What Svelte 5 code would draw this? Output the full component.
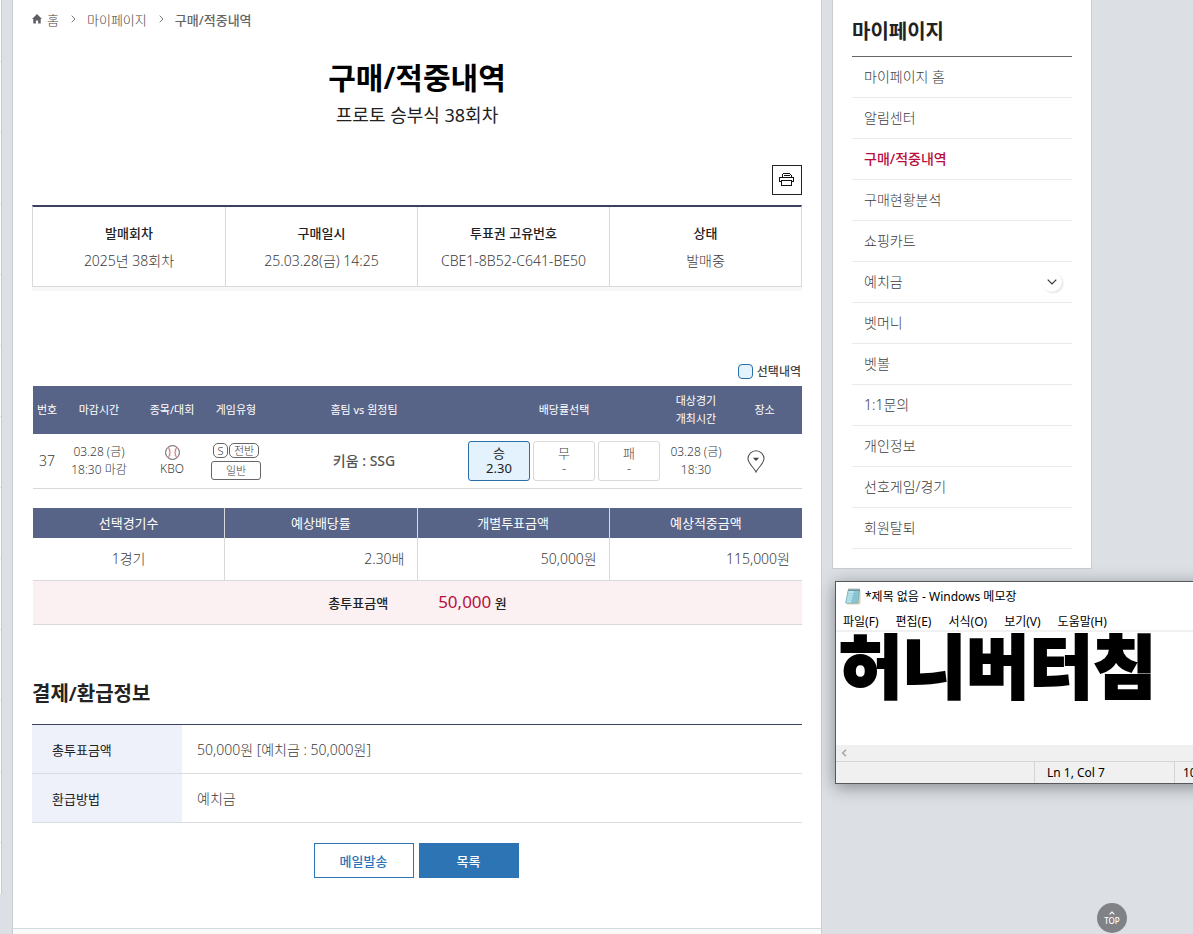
<script>
  const crumbs = ['홈', '마이페이지'];
  const summary = [
    { label: '발매회차', value: '2025년 38회차' },
    { label: '구매일시', value: '25.03.28(금) 14:25' },
    { label: '투표권 고유번호', value: 'CBE1-8B52-C641-BE50' },
    { label: '상태', value: '발매중' }
  ];
  const odds = [
    { name: '승', rate: '2.30', picked: true },
    { name: '무', rate: '-', picked: false },
    { name: '패', rate: '-', picked: false }
  ];
  const menu = [
    '마이페이지 홈', '알림센터', '구매/적중내역', '구매현황분석', '쇼핑카트', '예치금',
    '벳머니', '벳볼', '1:1문의', '개인정보', '선호게임/경기', '회원탈퇴'
  ];
  const padMenu = ['파일(F)', '편집(E)', '서식(O)', '보기(V)', '도움말(H)'];
</script>

<div class="page">
  <div class="edge"></div>

  <main>
    <nav class="crumbs">
      <svg width="10" height="10" viewBox="0 0 10 10"><path d="M5 0 10 5H8.7V9.5H6.1V6.5H3.9V9.5H1.3V5H0Z" fill="#5e5e64" /></svg>
      {#each crumbs as crumb}
        <a href="#top">{crumb}</a>
        <svg class="sep" width="5" height="8" viewBox="0 0 5 8"><path d="M.7.7 4 4 .7 7.3" fill="none" stroke="#777" /></svg>
      {/each}
      <strong>구매/적중내역</strong>
    </nav>

    <header>
      <h1>구매/적중내역</h1>
      <p>프로토 승부식 38회차</p>
    </header>

    <div class="tools">
      <button class="print" aria-label="인쇄">
        <svg width="16" height="14" viewBox="0 0 16 14" fill="none" stroke="#111" shape-rendering="crispEdges">
          <path d="M3.5 4.5V1.5L4.5 .5H10.5L12.5 2.5V4.5M5 2.5H11M2.5 8.5H.5V4.5H14.5V8.5H12.5M2.5 7.5H12.5V12.5H2.5Z" />
        </svg>
      </button>
    </div>

    <dl class="summary">
      {#each summary as item}
        <div><dt>{item.label}</dt><dd>{item.value}</dd></div>
      {/each}
    </dl>

    <div class="legend"><i></i>선택내역</div>

    <div class="tables">
      <table class="games">
        <colgroup>
          <col class="c-no" /><col class="c-close" /><col class="c-event" /><col class="c-type" />
          <col /><col class="c-odds" /><col class="c-time" /><col class="c-place" />
        </colgroup>
        <thead>
          <tr>
            <th>번호</th><th>마감시간</th><th>종목/대회</th><th>게임유형</th><th>홈팀 vs 원정팀</th>
            <th>배당률선택</th><th>대상경기<br />개최시간</th><th>장소</th>
          </tr>
        </thead>
        <tbody>
          <tr>
            <td class="no">37</td>
            <td>03.28 (금)<br />18:30 마감</td>
            <td>
              <span class="event">
                <svg width="15" height="15" viewBox="0 0 15 15" fill="none">
                  <circle cx="7.5" cy="7.5" r="6.9" stroke="#555" />
                  <path d="M3.6 2.2Q6.6 7.5 3.6 12.8M11.4 2.2Q8.4 7.5 11.4 12.8" stroke="#c9646e" />
                  <path d="M3.4 5H6.2M3.6 7.5H6.4M3.4 10H6.2M8.8 5H11.6M8.6 7.5H11.4M8.8 10H11.6" stroke="#e2a9ad" stroke-width=".7" />
                </svg>
                KBO
              </span>
            </td>
            <td>
              <span class="badges"><b class="pill">S</b><b class="pill wide">전반</b><b class="kind">일반</b></span>
            </td>
            <td class="teams">키움 : SSG</td>
            <td>
              <div class="odds">
                {#each odds as odd}
                  <button class:picked={odd.picked}><span>{odd.name}</span><span>{odd.rate}</span></button>
                {/each}
              </div>
            </td>
            <td>03.28 (금)<br />18:30</td>
            <td class="place">
              <svg width="18" height="23" viewBox="0 0 18 23">
                <path d="M9 22C7 17.5 1 13.5 1 8.8A8 8 0 0 1 17 8.8C17 13.5 11 17.5 9 22Z" fill="none" stroke="#555" stroke-width="1.1" />
                <path d="M5.8 7.7H12.2L9 11Z" fill="#444" />
              </svg>
            </td>
          </tr>
        </tbody>
      </table>

      <table class="totals">
        <thead>
          <tr><th>선택경기수</th><th>예상배당률</th><th>개별투표금액</th><th>예상적중금액</th></tr>
        </thead>
        <tbody>
          <tr><td class="count">1경기</td><td>2.30배</td><td>50,000원</td><td>115,000원</td></tr>
          <tr class="sum">
            <td colspan="4">
              <div><span>총투표금액</span><span><em>50,000</em> 원</span></div>
            </td>
          </tr>
        </tbody>
      </table>
    </div>

    <h2 class="section">결제/환급정보</h2>
    <table class="payment">
      <tbody>
        <tr><th>총투표금액</th><td>50,000원 [예치금 : 50,000원]</td></tr>
        <tr><th>환급방법</th><td>예치금</td></tr>
      </tbody>
    </table>

    <div class="actions">
      <button>메일발송</button>
      <button class="primary">목록</button>
    </div>
    <div class="foot"></div>
  </main>

  <aside>
    <h2>마이페이지</h2>
    <ul>
      {#each menu as item}
        <li>
          <a href="#top" class:current={item === '구매/적중내역'}>{item}</a>
          {#if item === '예치금'}
            <button class="more" aria-label="펼치기">
              <svg width="10" height="6" viewBox="0 0 10 6"><path d="M.7.7 5 5 9.3.7" fill="none" stroke="#333" stroke-width="1.2" /></svg>
            </button>
          {/if}
        </li>
      {/each}
    </ul>
  </aside>

  <section class="notepad">
    <div class="caption">
      <svg width="16" height="17" viewBox="0 0 16 17">
        <path d="M4 2.5H15.5V15.5L14 16.5H2Z" fill="#d8d2b4" />
        <path d="M3.2 2H14.5L12.8 15H.6Z" fill="#8cc9d9" stroke="#5c98ab" stroke-width=".6" />
        <path d="M3.6 3H9L6 14.4H1.4Z" fill="#c2e7ef" />
        <path d="M3 5.5H13M2.7 7.7H12.7M2.4 9.9H12.4M2 12.1H12" stroke="#70b2c5" stroke-width=".5" />
        <path d="M4 .5V3M6 .5V3M8 .5V3M10 .5V3M12 .5V3M14 .5V3" stroke="#4d5a60" stroke-width=".8" />
      </svg>
      *제목 없음 - Windows 메모장
    </div>
    <div class="padmenu">{#each padMenu as item}<span>{item}</span>{/each}</div>
    <div class="note">허니버터침</div>
    <div class="scroll">
      <svg width="6" height="8" viewBox="0 0 6 8"><path d="M5 .8 1.6 4 5 7.2" fill="none" stroke="#aaa" stroke-width="1.6" /></svg>
    </div>
    <div class="status"><span class="blank"></span><span class="pos">Ln 1, Col 7</span><span class="zoom">100%</span></div>
  </section>

  <a class="top" href="#top">
    <svg width="6" height="4" viewBox="0 0 6 4"><path d="M.6 3.4 3 1 5.4 3.4" fill="none" stroke="#fff" stroke-width="1.2" /></svg>
    TOP
  </a>
</div>

<style>
  :global(body) {
    background: #dce0e5;
  }
  .page {
    position: relative;
    display: flex;
    align-items: flex-start;
    gap: 10px;
    min-height: 100vh;
    box-sizing: border-box;
    padding-right: 101px;
    overflow: hidden;
    font-family: 'Noto Sans', 'Noto Sans CJK KR', sans-serif;
    font-size: 13px;
    font-weight: 300;
    color: #3c3c3c;
  }
  h1,
  h2,
  p,
  dl,
  dd,
  ul {
    margin: 0;
    padding: 0;
  }
  button {
    font: inherit;
    padding: 0;
    border-radius: 0;
    cursor: pointer;
  }
  a {
    color: inherit;
    text-decoration: none;
  }
  .edge {
    flex: none;
    width: 1px;
    height: 894px;
    border-right: 1px solid #c9cdd0;
    background: repeating-linear-gradient(#fff 0 61px, #e2e4e6 61px 62px, #fff 62px 71px);
  }
  main {
    flex: 1;
    min-width: 0;
    min-height: 100vh;
    box-sizing: border-box;
    padding: 0 19px;
    background: #fff;
    border: solid #c9cdd0;
    border-width: 0 1px;
  }
  .crumbs {
    display: flex;
    align-items: center;
    height: 38px;
    color: #444;
  }
  .crumbs a {
    margin-left: 5px;
  }
  .crumbs .sep {
    margin: 0 6px 0 12px;
  }
  .crumbs strong {
    margin-left: 5px;
    font-weight: 500;
    color: #666;
  }
  header {
    padding-top: 20px;
    text-align: center;
  }
  h1 {
    font-size: 30px;
    line-height: 40px;
    font-weight: 600;
    color: #000;
  }
  header p {
    font-size: 18px;
    line-height: 34px;
    font-weight: 400;
    color: #222;
  }
  .tools {
    display: flex;
    justify-content: flex-end;
    padding: 33px 0 10px;
  }
  .print {
    display: flex;
    align-items: center;
    justify-content: center;
    width: 30px;
    height: 30px;
    background: #fff;
    border: 1px solid #222;
  }
  .summary {
    display: grid;
    grid-template-columns: repeat(4, 1fr);
    text-align: center;
    border: 1px solid #d9d9d9;
    border-top: 2px solid #3b4260;
    box-shadow: 0 4px 0 #f7f7f7;
  }
  .summary div {
    padding: 13px 0 12px;
  }
  .summary div + div {
    border-left: 1px solid #d9d9d9;
  }
  dt {
    font-weight: 500;
    line-height: 27px;
    color: #222;
  }
  dd {
    font-size: 14px;
    line-height: 27px;
  }
  .legend {
    display: flex;
    align-items: center;
    justify-content: flex-end;
    gap: 4px;
    padding: 70px 1px 0 0;
    font-size: 12px;
    line-height: 29px;
    font-weight: 500;
    color: #444;
  }
  .legend i {
    width: 13px;
    height: 13px;
    border: 1px solid #2c6ea8;
    border-radius: 4px;
    background: #e3f2fc;
  }
  table {
    width: 100%;
    border-collapse: separate;
    border-spacing: 0;
    table-layout: fixed;
  }
  th,
  td {
    padding: 0;
  }
  .tables {
    padding-left: 1px;
  }
  .tables th {
    background: #586487;
    color: #fff;
    font-weight: 400;
  }
  .games {
    font-size: 12px;
    line-height: 18px;
    text-align: center;
  }
  .c-no {
    width: 28px;
  }
  .c-close {
    width: 76px;
  }
  .c-event {
    width: 70px;
  }
  .c-type {
    width: 58px;
  }
  .c-odds {
    width: 202px;
  }
  .c-time {
    width: 62px;
  }
  .c-place {
    width: 75px;
  }
  .games th {
    height: 48px;
    font-size: 11px;
    white-space: nowrap;
  }
  .games td {
    height: 54px;
    border-bottom: 1px solid #d9d9d9;
  }
  .games .no {
    font-size: 14px;
  }
  .games .teams {
    font-size: 14px;
    font-weight: 500;
    color: #555;
  }
  .event {
    display: flex;
    flex-direction: column;
    align-items: center;
    line-height: 18px;
  }
  .badges {
    display: flex;
    flex-wrap: wrap;
    justify-content: center;
    gap: 3px 1px;
  }
  .badges b {
    box-sizing: border-box;
    font-size: 11px;
    font-weight: 300;
    border: 1px solid #666;
  }
  .pill {
    width: 15px;
    line-height: 13px;
    border-radius: 5px;
  }
  .badges .wide {
    width: 30px;
  }
  .kind {
    width: 50px;
    line-height: 17px;
    border-radius: 3px;
  }
  .odds {
    display: flex;
    justify-content: center;
    gap: 3px;
  }
  .odds button {
    display: flex;
    flex-direction: column;
    align-items: center;
    justify-content: center;
    box-sizing: border-box;
    width: 62px;
    height: 40px;
    font-size: 13px;
    line-height: 15px;
    color: #444;
    background: #fff;
    border: 1px solid #d9d9d9;
    border-radius: 3px;
  }
  .odds .picked {
    color: #222;
    font-weight: 400;
    background: #e3f2fc;
    border-color: #2c6ea8;
  }
  .games .place {
    padding-right: 17px;
  }
  .place svg {
    display: block;
    margin: 0 auto;
  }
  .totals {
    margin-top: 19px;
    text-align: right;
  }
  .totals th {
    height: 28px;
    padding-bottom: 2px;
    text-align: center;
  }
  .totals td {
    height: 40px;
    padding: 0 12px 2px 0;
    font-size: 14px;
    border-bottom: 1px solid #d9d9d9;
  }
  .totals :is(th, td):not(:last-child) {
    border-right: 1px solid #d9d9d9;
  }
  .totals .count {
    padding-right: 0;
    text-align: center;
  }
  .totals .sum td {
    height: 43px;
    padding: 0;
    font-size: 13px;
    background: #fbf1f3;
  }
  .sum div {
    display: flex;
    justify-content: center;
    align-items: center;
    gap: 50px;
    line-height: 24px;
    font-weight: 500;
    color: #222;
  }
  em {
    font-size: 17px;
    font-style: normal;
    font-weight: 400;
    color: #b80f3f;
  }
  .section {
    padding: 54px 0 16px;
    font-size: 20px;
    line-height: 29px;
    font-weight: 600;
    color: #222;
  }
  .payment {
    text-align: left;
    border-top: 1px solid #3b4260;
  }
  .payment :is(th, td) {
    height: 48px;
    border-bottom: 1px solid #d9dde2;
  }
  .payment th {
    width: 130px;
    padding-left: 20px;
    font-weight: 400;
    color: #222;
    background: #eef0fa;
  }
  .payment td {
    padding-left: 15px;
    font-size: 14px;
  }
  .actions {
    display: flex;
    justify-content: center;
    gap: 5px;
    padding: 20px 2px 50px 0;
  }
  .actions button {
    width: 100px;
    height: 35px;
    border: 1px solid #2d74b5;
    background: #fff;
    color: #2d74b5;
    font-weight: 500;
  }
  .actions .primary {
    background: #2d74b5;
    color: #fff;
  }
  .foot {
    height: 5px;
    margin: 0 -19px;
    border-top: 1px solid #d5dade;
    background: #fafafa;
  }
  aside {
    flex: none;
    width: 260px;
    box-sizing: border-box;
    padding: 8px 19px 19px;
    background: #fff;
    border: 1px solid #c9cdd0;
    border-top: 0;
  }
  aside h2 {
    font-size: 20px;
    line-height: 48px;
    font-weight: 600;
    color: #222;
    border-bottom: 1px solid #666;
  }
  ul {
    list-style: none;
  }
  li {
    display: flex;
    align-items: center;
    justify-content: space-between;
    padding: 0 10px 0 12px;
    font-size: 14px;
    line-height: 40px;
    border-bottom: 1px solid #e9e9e9;
  }
  .current {
    color: #b80f3f;
    font-weight: 500;
  }
  .more {
    display: flex;
    align-items: center;
    justify-content: center;
    width: 20px;
    height: 20px;
    border: 0;
    border-radius: 50%;
    background: #fff;
    box-shadow: 1px 1px 2px #ddd;
  }
  .notepad {
    position: absolute;
    left: 835px;
    top: 581px;
    width: 480px;
    box-sizing: border-box;
    background: #fff;
    border: 1px solid #55585c;
    box-shadow: 0 3px 16px rgba(0, 0, 0, 0.4);
    font-size: 12px;
    font-weight: 400;
    color: #000;
  }
  .caption {
    display: flex;
    align-items: center;
    gap: 4px;
    height: 28px;
    padding-left: 9px;
  }
  .padmenu {
    display: flex;
    gap: 17px;
    height: 20px;
    padding-left: 7px;
    line-height: 23px;
    border-bottom: 2px solid #f1f1f1;
  }
  .note {
    height: 113px;
    padding-left: 3px;
    font-family: 'Noto Sans CJK KR', sans-serif;
    font-size: 69px;
    line-height: 62px;
    font-weight: 900;
    -webkit-text-stroke: 2px #000;
  }
  .scroll {
    display: flex;
    align-items: center;
    height: 16px;
    padding-left: 5px;
    background: #f0f0f0;
    border-bottom: 1px solid #d4d4d4;
  }
  .status {
    display: flex;
    line-height: 21px;
    background: #f0f0f0;
  }
  .status span {
    box-sizing: border-box;
    border-right: 1px solid #d4d4d4;
  }
  .blank {
    width: 199px;
  }
  .pos {
    width: 140px;
    padding-left: 12px;
  }
  .zoom {
    width: 60px;
    padding-left: 8px;
  }
  .top {
    position: fixed;
    right: 66px;
    bottom: 1px;
    display: flex;
    flex-direction: column;
    align-items: center;
    justify-content: center;
    gap: 1px;
    width: 30px;
    height: 30px;
    border-radius: 50%;
    background: #808286;
    color: #fff;
    font-size: 8px;
    line-height: 10px;
    font-weight: 500;
  }
</style>
